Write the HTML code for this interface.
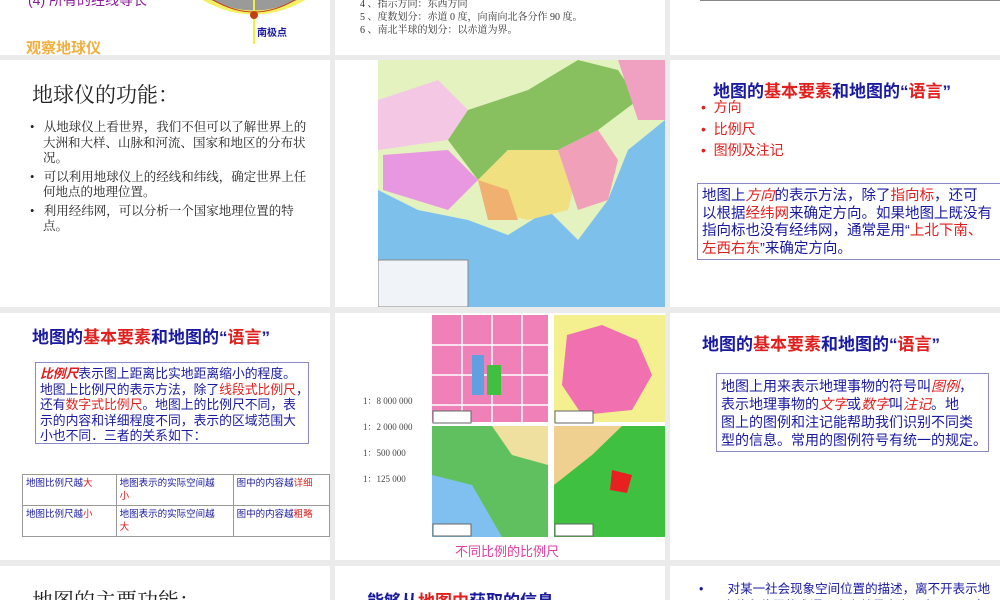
<!DOCTYPE html>
<html><head><meta charset="utf-8"><style>
*{margin:0;padding:0;box-sizing:border-box}
body{width:1000px;height:600px;background:#ebebeb;position:relative;overflow:hidden;font-family:"Liberation Sans","Noto Sans CJK SC",sans-serif}
.s{position:absolute;background:#fff;overflow:hidden}
.a{position:absolute;white-space:nowrap}
.b{color:#1a1aa0}.r{color:#e0201e}
.box{position:absolute;border:1px solid #8a8ac8;color:#1a1aa0;white-space:nowrap}
.serif{font-family:"Liberation Serif","Noto Serif CJK SC",serif}
</style></head><body>
<!-- row1 -->
<div class="s" style="left:0;top:0;width:330px;height:55px">
 <div class="a" style="left:28px;top:-10px;color:#8a1a9a;font-size:14px">(4) 所有的经线等长</div>
 <svg class="a" style="left:190px;top:0" width="130" height="48"><path d="M8 -5 Q64 30 120 -5" fill="#9a9a9a" stroke="#f5f060" stroke-width="4"/><path d="M20 -2 Q64 26 108 -2" fill="none" stroke="#c04020" stroke-width="1"/><line x1="64" y1="0" x2="64" y2="44" stroke="#f0f040" stroke-width="2"/><circle cx="64" cy="15" r="4" fill="#c04010"/></svg>
 <div class="a" style="left:257px;top:24px;color:#1a1aa0;font-size:10px;font-weight:bold">南极点</div>
 <div class="a" style="left:26px;top:37px;color:#f0b040;font-size:15px;font-weight:bold">观察地球仪</div>
</div>
<div class="s serif" style="left:335px;top:0;width:330px;height:55px;color:#333;font-size:10px;line-height:13px">
 <div class="a" style="left:25px;top:-2px">4 、指示方向：东西方向</div>
 <div class="a" style="left:25px;top:11px">5 、度数划分：赤道 0 度，向南向北各分作 90 度。</div>
 <div class="a" style="left:25px;top:24px">6 、南北半球的划分：以赤道为界。</div>
</div>
<div class="s" style="left:670px;top:0;width:330px;height:55px"><div class="a" style="left:30px;top:0;width:300px;height:1px;border-top:1px solid #888"></div></div>
<!-- row2 -->
<div class="s serif" style="left:0;top:60px;width:330px;height:247px;color:#222">
 <div class="a" style="left:32px;top:19px;font-size:21px">地球仪的功能：</div>
 <div class="a" style="left:30px;top:60px;font-size:12.5px;line-height:15.5px;white-space:normal;width:285px">
  <div style="padding-left:13px;text-indent:-13px">•&nbsp;&nbsp; 从地球仪上看世界，我们不但可以了解世界上的大洲和大样、山脉和河流、国家和地区的分布状况。</div>
  <div style="padding-left:13px;text-indent:-13px;margin-top:3px">•&nbsp;&nbsp; 可以利用地球仪上的经线和纬线，确定世界上任何地点的地理位置。</div>
  <div style="padding-left:13px;text-indent:-13px;margin-top:3px">•&nbsp;&nbsp; 利用经纬网，可以分析一个国家地理位置的特点。</div>
 </div>
</div>
<div class="s" style="left:335px;top:60px;width:330px;height:247px">
 <svg class="a" style="left:43px;top:0" width="287" height="247">
  <rect width="287" height="247" fill="#7ec0ec"/>
  <path d="M0 0H287V60L250 90 230 140 200 180 170 150 130 175 90 160 40 150 0 130Z" fill="#e4f2c0"/>
  <path d="M0 40 60 20 90 50 70 80 0 90Z" fill="#f4c8e4"/>
  <path d="M5 95 70 90 100 120 70 150 5 130Z" fill="#e898e0"/>
  <path d="M90 50 150 30 200 0 240 10 260 40 220 70 180 90 130 90 100 120 70 80Z" fill="#88c060"/>
  <path d="M100 120 130 90 180 90 200 110 190 150 150 160 110 150Z" fill="#f0e080"/>
  <path d="M180 90 220 70 240 100 230 140 200 150 190 120Z" fill="#f0a0b8"/>
  <path d="M240 0 287 0 287 60 260 60Z" fill="#f0a0c0"/>
  <path d="M100 120 130 130 140 160 110 160Z" fill="#f0b070"/>
  <rect x="0" y="200" width="90" height="47" fill="#f0f4f8" stroke="#888"/>
 </svg>
</div>
<div class="s" style="left:670px;top:60px;width:330px;height:247px">
 <div class="a b" style="left:43px;top:17px;font-size:17px;font-weight:bold">地图的<span class="r">基本要素</span>和地图的“<span class="r">语言</span>”</div>
 <div class="a r" style="left:31px;top:37px;font-size:14px;line-height:21.5px">•&nbsp; 方向<br>•&nbsp; 比例尺<br>•&nbsp; 图例及注记</div>
 <div class="box" style="left:27px;top:123px;width:305px;height:77px;font-size:14.5px;line-height:17.5px;padding:4px 4px">地图上<i class="r">方向</i>的表示方法，除了<span class="r">指向标</span>，还可<br>以根据<span class="r">经纬网</span>来确定方向。如果地图上既没有<br>指向标也没有经纬网，通常是用“<span class="r">上北下南、</span><br><span class="r">左西右东</span>”来确定方向。</div>
</div>
<!-- row3 -->
<div class="s" style="left:0;top:313px;width:330px;height:247px">
 <div class="a b" style="left:32px;top:10px;font-size:17px;font-weight:bold">地图的<span class="r">基本要素</span>和地图的“<span class="r">语言</span>”</div>
 <div class="box" style="left:35px;top:49px;width:274px;height:82px;font-size:12.8px;line-height:15.5px;padding:3px 4px"><b class="r" style="font-style:italic">比例尺</b>表示图上距离比实地距离缩小的程度。<br>地图上比例尺的表示方法，除了<span class="r">线段式比例尺</span>，<br>还有<span class="r">数字式比例尺</span>。地图上的比例尺不同，表<br>示的内容和详细程度不同，表示的区域范围大<br>小也不同．三者的关系如下：</div>
 <table class="a" style="left:22px;top:161px;border-collapse:collapse;font-size:9.5px;color:#1a1aa0;line-height:13px">
  <tr style="height:29px;vertical-align:top"><td style="border:1px solid #999;width:99px;padding:2px 3px">地图比例尺越<span class="r">大</span></td><td style="border:1px solid #999;width:121px;padding:2px 3px">地图表示的实际空间越<br><span class="r">小</span></td><td style="border:1px solid #999;width:100px;padding:2px 3px">图中的内容越<span class="r">详细</span></td></tr>
  <tr style="height:30px;vertical-align:top"><td style="border:1px solid #999;padding:2px 3px">地图比例尺越<span class="r">小</span></td><td style="border:1px solid #999;padding:2px 3px">地图表示的实际空间越<br><span class="r">大</span></td><td style="border:1px solid #999;padding:2px 3px">图中的内容越<span class="r">粗略</span></td></tr>
 </table>
</div>
<div class="s serif" style="left:335px;top:313px;width:330px;height:247px">
 <div class="a" style="left:28px;top:75px;font-size:9px;color:#444;line-height:26px">1：8 000 000<br>1：2 000 000<br>1：500 000<br>1：125 000</div>
 <svg class="a" style="left:97px;top:2px" width="233" height="222">
  <rect x="0" y="0" width="116" height="107" fill="#f080b8"/>
  <path d="M30 0V107M60 0V107M90 0V107M0 30H116M0 60H116M0 90H116" stroke="#fff" stroke-width="1.5"/>
  <rect x="40" y="40" width="12" height="40" fill="#60a0e0"/><rect x="55" y="50" width="14" height="30" fill="#40c040"/>
  <rect x="122" y="0" width="111" height="107" fill="#f4f090"/>
  <path d="M135 20 170 10 205 25 220 60 200 95 150 100 130 70Z" fill="#f070b0"/>
  <rect x="0" y="111" width="116" height="111" fill="#60c060"/>
  <path d="M0 160 40 170 70 222 0 222Z" fill="#80c0f0"/><path d="M60 111 116 111 116 150 80 140Z" fill="#f0e0a0"/>
  <rect x="122" y="111" width="111" height="111" fill="#40c040"/>
  <path d="M122 111 190 111 160 140 122 170Z" fill="#f0d090"/>
  <path d="M180 155 200 160 195 178 178 175Z" fill="#e82020"/>
  <rect x="1" y="96" width="38" height="12" fill="#fff" stroke="#666"/>
  <rect x="123" y="96" width="38" height="12" fill="#fff" stroke="#666"/>
  <rect x="1" y="209" width="38" height="12" fill="#fff" stroke="#666"/>
  <rect x="123" y="209" width="38" height="12" fill="#fff" stroke="#666"/>
 </svg>
 <div class="a" style="left:120px;top:228px;font-size:13px;color:#e040a0;font-family:'Liberation Sans','Noto Sans CJK SC',sans-serif">不同比例的比例尺</div>
</div>
<div class="s" style="left:670px;top:313px;width:330px;height:247px">
 <div class="a b" style="left:32px;top:17px;font-size:17px;font-weight:bold">地图的<span class="r">基本要素</span>和地图的“<span class="r">语言</span>”</div>
 <div class="box" style="left:46px;top:60px;width:273px;height:79px;font-size:14px;line-height:18px;padding:3px 4px">地图上用来表示地理事物的符号叫<i class="r">图例</i>，<br>表示地理事物的<i class="r">文字</i>或<i class="r">数字</i>叫<i class="r">注记</i>。地<br>图上的图例和注记能帮助我们识别不同类<br>型的信息。常用的图例符号有统一的规定。</div>
</div>
<!-- row4 -->
<div class="s serif" style="left:0;top:566px;width:330px;height:34px"><div class="a" style="left:32px;top:19px;font-size:21px;color:#222">地图的主要功能：</div></div>
<div class="s" style="left:335px;top:566px;width:330px;height:34px"><div class="a b" style="left:32px;top:21px;font-size:17px;font-weight:bold">能够从<span class="r">地图中</span>获取的信息</div></div>
<div class="s" style="left:670px;top:566px;width:330px;height:34px"><div class="a b" style="left:29px;top:12px;font-size:12.5px">•&nbsp;&nbsp;&nbsp;&nbsp;&nbsp;&nbsp; 对某一社会现象空间位置的描述，离不开表示地</div><div class="a b" style="left:40px;top:29px;font-size:12.5px">理方位和位置的术语，<span class="r">方向</span>就是方向、东、西、南</div></div>
</body></html>
